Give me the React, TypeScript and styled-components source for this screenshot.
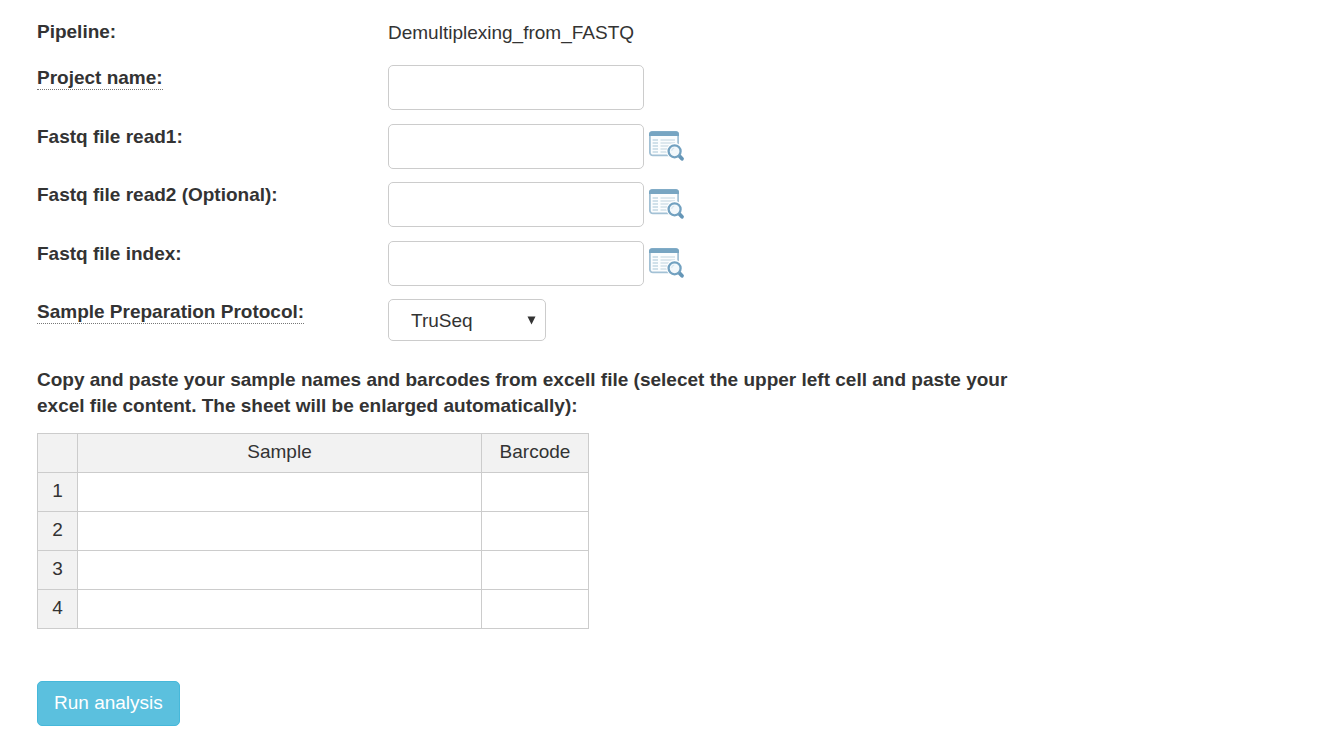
import React from 'react';
import styled, { createGlobalStyle } from 'styled-components';

const GlobalStyle = createGlobalStyle`
  * { box-sizing: border-box; }
  body {
    margin: 0;
    background: #fff;
    color: #333;
    font-family: "Liberation Sans", Arial, Helvetica, sans-serif;
    font-size: 19px;
    line-height: 26px;
  }
  input, select, button { font: inherit; color: inherit; }
`;

const Form = styled.form`
  padding: 18px 37px 12px;
`;

const Row = styled.div`
  display: grid;
  grid-template-columns: 351px minmax(0, 1fr);
  align-items: start;
  margin-bottom: 13px;

  &:nth-of-type(even) { margin-bottom: 14px; }
  &:first-of-type { margin-bottom: 19px; }
  &:last-of-type { margin-bottom: 26px; }
`;

const Name = styled.div`
  padding-top: 1px;
  font-weight: 700;
`;

const Label = styled.label<{ $hint?: boolean }>`
  justify-self: start;
  height: 25px;
  line-height: 25px;
  font-weight: 700;
  border-bottom: ${(p) => (p.$hint ? '1px dotted #777' : 'none')};
  cursor: ${(p) => (p.$hint ? 'help' : 'default')};
`;

const Value = styled.div`
  padding-top: 2px;
`;

const Field = styled.div`
  display: flex;
  gap: 5px;
  align-items: flex-start;
`;

const TextInput = styled.input`
  width: 256px;
  height: 45px;
  padding: 8px 16px;
  border: 1px solid #ccc;
  border-radius: 5px;
  background: #fff;
`;

const BrowseButton = styled.button`
  display: block;
  margin-top: 6px;
  padding: 0;
  border: 0;
  background: none;
  cursor: pointer;

  svg { display: block; }
`;

const SelectBox = styled.div`
  position: relative;
  width: 158px;

  svg {
    position: absolute;
    right: 10px;
    top: 17px;
    pointer-events: none;
  }
`;

const Select = styled.select`
  display: block;
  width: 100%;
  height: 42px;
  padding: 2px 22px 0;
  border: 1px solid #ccc;
  border-radius: 5px;
  background: #fff;
  appearance: none;
`;

const Instructions = styled.p`
  max-width: 990px;
  margin: 0 0 14px;
  font-weight: 700;
`;

const Sheet = styled.table`
  width: 552px;
  table-layout: fixed;
  border-collapse: collapse;
  margin-bottom: 52px;
`;

const Head = styled.th<{ $width: number }>`
  width: ${(p) => p.$width}px;
  height: 39px;
  padding: 0 0 2px;
  border: 1px solid #ccc;
  background: #f2f2f2;
  font-weight: 400;
  text-align: center;
`;

const Cell = styled.td`
  height: 39px;
  padding: 0 5px;
  border: 1px solid #ccc;
`;

const RunButton = styled.button`
  display: block;
  height: 45px;
  padding: 0 16px 2px;
  border: 1px solid #46b8da;
  border-radius: 5px;
  background: #5bc0de;
  color: #fff;
  cursor: pointer;
`;

function BrowseIcon() {
  return (
    <svg width="36" height="32" viewBox="0 0 36 32" aria-hidden="true">
      <rect x="0.9" y="1.8" width="28.2" height="23.6" rx="3" fill="#fbfdfe" stroke="#a3c1d5" strokeWidth="1.8" />
      <path d="M0 6V4.2Q0 1.2 3 1.2H27Q30 1.2 30 4.2V6Z" fill="#77a5c2" />
      <path d="M3.6 10h5.4M3.6 13h5.4M3.6 16h5.4M3.6 19h5.4M3.6 22h5.4" stroke="#c3d8e3" strokeWidth="1.6" />
      <path d="M11.5 10h14.5M11.5 13h14.5M11.5 16h9M11.5 19h7M11.5 22h7" stroke="#d3e1e9" strokeWidth="1.6" />
      <circle cx="25.6" cy="21.3" r="8.2" fill="#fff" />
      <path d="M30.4 26L33 28.8" stroke="#6596b7" strokeWidth="3.8" strokeLinecap="round" />
      <circle cx="25.6" cy="21.3" r="6" fill="#f3f8fb" stroke="#72a1c0" strokeWidth="2.3" />
      <path d="M22.6 20.8Q23 18.6 25.2 18.2" fill="none" stroke="#d6e5ee" strokeWidth="1.2" />
    </svg>
  );
}

const files = [
  { id: 'read1', label: 'Fastq file read1:' },
  { id: 'read2', label: 'Fastq file read2 (Optional):' },
  { id: 'index', label: 'Fastq file index:' },
];

export default function App() {
  return (
    <Form onSubmit={(e) => e.preventDefault()}>
      <GlobalStyle />
      <Row>
        <Name>Pipeline:</Name>
        <Value>Demultiplexing_from_FASTQ</Value>
      </Row>
      <Row>
        <Label $hint htmlFor="project">Project name:</Label>
        <Field><TextInput id="project" type="text" /></Field>
      </Row>
      {files.map((file) => (
        <Row key={file.id}>
          <Label htmlFor={file.id}>{file.label}</Label>
          <Field>
            <TextInput id={file.id} type="text" />
            <BrowseButton type="button" aria-label={`Browse ${file.id}`}><BrowseIcon /></BrowseButton>
          </Field>
        </Row>
      ))}
      <Row>
        <Label $hint htmlFor="protocol">Sample Preparation Protocol:</Label>
        <SelectBox>
          <Select id="protocol" defaultValue="TruSeq">
            <option>TruSeq</option>
          </Select>
          <svg width="9" height="9" viewBox="0 0 9 9" aria-hidden="true">
            <path d="M0.5 0.5H8.5L4.5 8.5Z" fill="#333" />
          </svg>
        </SelectBox>
      </Row>
      <Instructions>
        Copy and paste your sample names and barcodes from excell file (selecet the upper left cell and paste your
        excel file content. The sheet will be enlarged automatically):
      </Instructions>
      <Sheet>
        <thead>
          <tr>
            <Head $width={40} />
            <Head $width={404} scope="col">Sample</Head>
            <Head $width={107} scope="col">Barcode</Head>
          </tr>
        </thead>
        <tbody>
          {[1, 2, 3, 4].map((n) => (
            <tr key={n}>
              <Head $width={40} scope="row">{n}</Head>
              <Cell />
              <Cell />
            </tr>
          ))}
        </tbody>
      </Sheet>
      <RunButton type="submit">Run analysis</RunButton>
    </Form>
  );
}
